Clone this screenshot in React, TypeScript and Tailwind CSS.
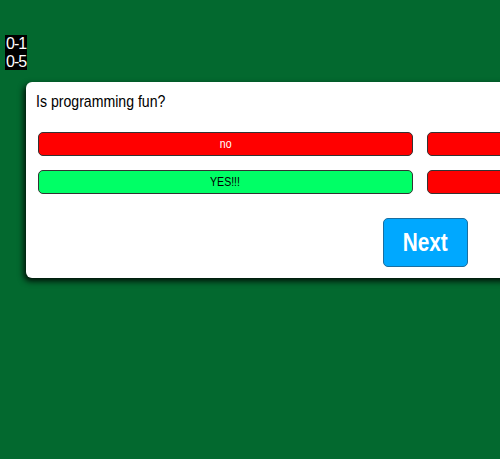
export default function App() {
  const answers = [
    { label: "no", tone: "red" },
    { label: "", tone: "red" },
    { label: "YES!!!", tone: "green" },
    { label: "", tone: "red" },
  ];

  return (
    <div className="w-[500px] h-[459px] overflow-hidden bg-[#03692f] font-['Liberation_Sans',Arial,sans-serif] relative">
      <div className="flex pt-[35px] pl-[5px]">
        <div className="flex flex-col bg-black text-white text-[16px] leading-[17.5px] tracking-[-1px] pl-[1px] pr-[1px]">
          <span>0-1</span>
          <span>0-5</span>
        </div>
      </div>

      <div className="ml-[26px] mt-[12px] w-[820px] h-[196px] bg-white rounded-[6px] shadow-[-2px_3px_6px_rgba(0,0,0,0.9)] pt-[10px] pl-[10px]">
        <div className="text-[17px] leading-[20px] text-black origin-left scale-x-[0.83] whitespace-nowrap">
          Is programming fun?
        </div>

        <div className="mt-[20px] ml-[2px] grid grid-cols-[375px_375px] gap-x-[14px] gap-y-[14px]">
          {answers.map((a, i) => (
            <button
              key={i}
              className={`h-[24px] rounded-[5px] border border-[#333] text-[12px] flex items-center justify-center ${
                a.tone === "green" ? "bg-[#00ff66] text-black" : "bg-[#ff0000] text-white"
              }`}
            >
              <span className="inline-block scale-x-[0.88]">{a.label}</span>
            </button>
          ))}
        </div>

        <div className="mt-[24px] pl-[347px]">
          <button className="w-[85px] h-[49px] rounded-[5px] bg-[#00a8ff] border border-[#1a6ea0] text-white text-[26px] font-bold flex items-center justify-center">
            <span className="inline-block scale-x-[0.8]">Next</span>
          </button>
        </div>
      </div>
    </div>
  );
}
